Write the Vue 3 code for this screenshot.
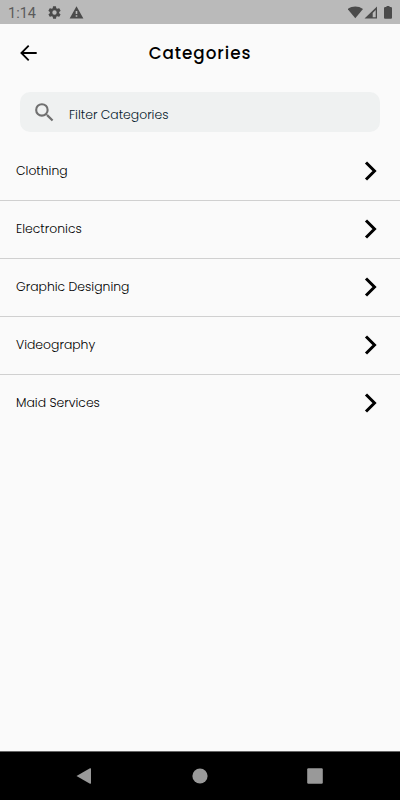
<template>
    <div class="screen">
        <div class="status-bar">
            <span class="time">1:14</span>
            <svg class="status-gear" viewBox="0 0 24 24" width="15" height="15">
                <path
                    d="M19.4 13a7.5 7.5 0 0 0 0-2l2.1-1.6a.5.5 0 0 0 .1-.7l-2-3.4a.5.5 0 0 0-.6-.2l-2.5 1a7.6 7.6 0 0 0-1.7-1L14.4 2.4a.5.5 0 0 0-.5-.4H10a.5.5 0 0 0-.5.4L9.2 5.1a7.6 7.6 0 0 0-1.7 1L5 5.1a.5.5 0 0 0-.6.2l-2 3.4a.5.5 0 0 0 .1.7L4.6 11a7.5 7.5 0 0 0 0 2l-2.1 1.6a.5.5 0 0 0-.1.7l2 3.4c.1.2.4.3.6.2l2.5-1c.5.4 1.1.7 1.7 1l.4 2.7c0 .2.2.4.5.4H14c.2 0 .4-.2.5-.4l.3-2.7a7.6 7.6 0 0 0 1.700-1l2.500 1c.2.100.5 0 .6-.2l2-3.400a.5.5 0 0 0-.1-.7zM12 15.500a3.500 3.500 0 1 1 0-7 3.500 3.500 0 0 1 0 7z" />
            </svg>
            <svg class="status-warning" viewBox="0 0 24 24" width="15" height="15">
                <path d="M1 21.500h22L12 2zM13.300 18.700h-2.600v-2.300h2.600zm0-4.200h-2.600V9.500h2.600z" />
            </svg>
            <svg class="status-right" viewBox="0 0 48 16" width="48" height="16">
                <path d="M-.5 4C4.200.7 10.300.7 15 4L7.300 13.300z" />
                <path d="M29 1.500v12H16.500zM27.700 5l-3 3v4.200h3z" fill-rule="evenodd" />
                <path d="M38.500 2v-1h3v1h1.300q1.200 0 1.200 1.200V12.700q0 1-1 1h-6q-1 0-1-1V3.200q0-1.200 1.200-1.200z" />
            </svg>
        </div>

        <header class="header">
            <svg class="back" viewBox="0 0 24 24" width="24" height="24">
                <path d="M20.700 12H5.700M12.700 4.700L5.400 12l7.300 7.300" />
            </svg>
            <h1 class="title">Categories</h1>
        </header>

        <div class="search-bar">
            <svg viewBox="0 0 24 24" width="25" height="25">
                <path
                    d="M15.500 14h-.79l-.28-.27A6.470 6.470 0 0 0 16 9.500 6.500 6.500 0 1 0 9.500 16c1.610 0 3.090-.59 4.230-1.570l.27.28v.79l5 4.990L20.490 19zm-6 0a4.500 4.500 0 1 1 0-9 4.500 4.500 0 0 1 0 9z" />
            </svg>
            <input v-model="keyword" type="text" class="search_input" placeholder="Filter Categories" />
        </div>

        <ul class="category-list">
            <li v-for="category in filteredCategories" :key="category" class="category-item">
                <span>{{ category }}</span>
                <svg viewBox="0 0 14 20" width="14" height="20">
                    <path d="M2 1.500L10.500 10L2 18.500" />
                </svg>
            </li>
        </ul>

        <nav class="nav-bar">
            <svg viewBox="0 0 18 18" width="18" height="18">
                <path d="M1.500 9L15 1.300q1-.4 1 .6v14.200q0 1-1 .6z" />
            </svg>
            <svg viewBox="0 0 18 18" width="18" height="18">
                <circle cx="9" cy="9" r="7.600" />
            </svg>
            <svg viewBox="0 0 18 18" width="18" height="18">
                <rect x="1.200" y="1.200" width="15.600" height="15.600" rx="1.200" />
            </svg>
        </nav>
    </div>
</template>

<script setup>
import { computed, ref } from 'vue';

const keyword = ref('');

const categories = ['Clothing', 'Electronics', 'Graphic Designing', 'Videography', 'Maid Services'];

const filteredCategories = computed(() =>
    categories.filter((category) => category.toLowerCase().includes(keyword.value.toLowerCase()))
);
</script>

<style>
body {
    margin: 0;
    background: #fafafa;
}
</style>

<style scoped>
.screen {
    display: flex;
    flex-direction: column;
    height: 800px;
    background: #fafafa;
    color: #000;
    font-family: Poppins, Inter, sans-serif;
}

.status-bar {
    display: flex;
    align-items: center;
    box-sizing: border-box;
    height: 24px;
    padding: 1px 4px 0 8px;
    background: #bababa;
    fill: #4b4b4b;
}

.time {
    width: 38.5px;
    padding-top: 1px;
    color: #5a5a5a;
    font: 14.5px Roboto, sans-serif;
}

.status-warning {
    margin-left: 7.5px;
}

.status-right {
    margin-left: auto;
}

.header {
    display: grid;
    grid-template-columns: 40px 1fr 40px;
    align-items: center;
    height: 58px;
    padding: 0 16px;
}

.back {
    fill: none;
    stroke: #000;
    stroke-width: 1.8;
}

.title {
    margin: 0;
    font-size: 16.8px;
    font-weight: 500;
    letter-spacing: 0.95px;
    text-align: center;
}

.search-bar {
    display: flex;
    align-items: center;
    gap: 12px;
    height: 40px;
    margin: 10px 20px 11px;
    padding: 0 12px;
    border-radius: 10px;
    background: #eff1f1;
}

.search-bar svg {
    fill: #707070;
}

.search_input {
    flex: 1;
    padding: 6px 0 0;
    border: 0;
    outline: 0;
    background: none;
    font: inherit;
    font-size: 12.4px;
    font-weight: 300;
}

.search_input::placeholder {
    color: #06192b;
    opacity: 1;
}

.category-list {
    flex: 1;
    margin: 0;
    padding: 0;
    list-style: none;
    font-size: 12.4px;
    font-weight: 300;
}

.category-item {
    display: flex;
    align-items: center;
    justify-content: space-between;
    box-sizing: border-box;
    height: 58px;
    padding: 0 22px 1px 16px;
    border-bottom: 1px solid #d0d0d0;
}

.category-item:last-child {
    border-bottom-color: transparent;
}

.category-item svg {
    fill: none;
    stroke: #000;
    stroke-width: 3;
}

.nav-bar {
    display: flex;
    align-items: center;
    justify-content: space-between;
    box-sizing: border-box;
    height: 49px;
    padding: 0 76px 0 75px;
    border-top: 1px solid #666;
    background: #000;
    fill: #999;
}
</style>
